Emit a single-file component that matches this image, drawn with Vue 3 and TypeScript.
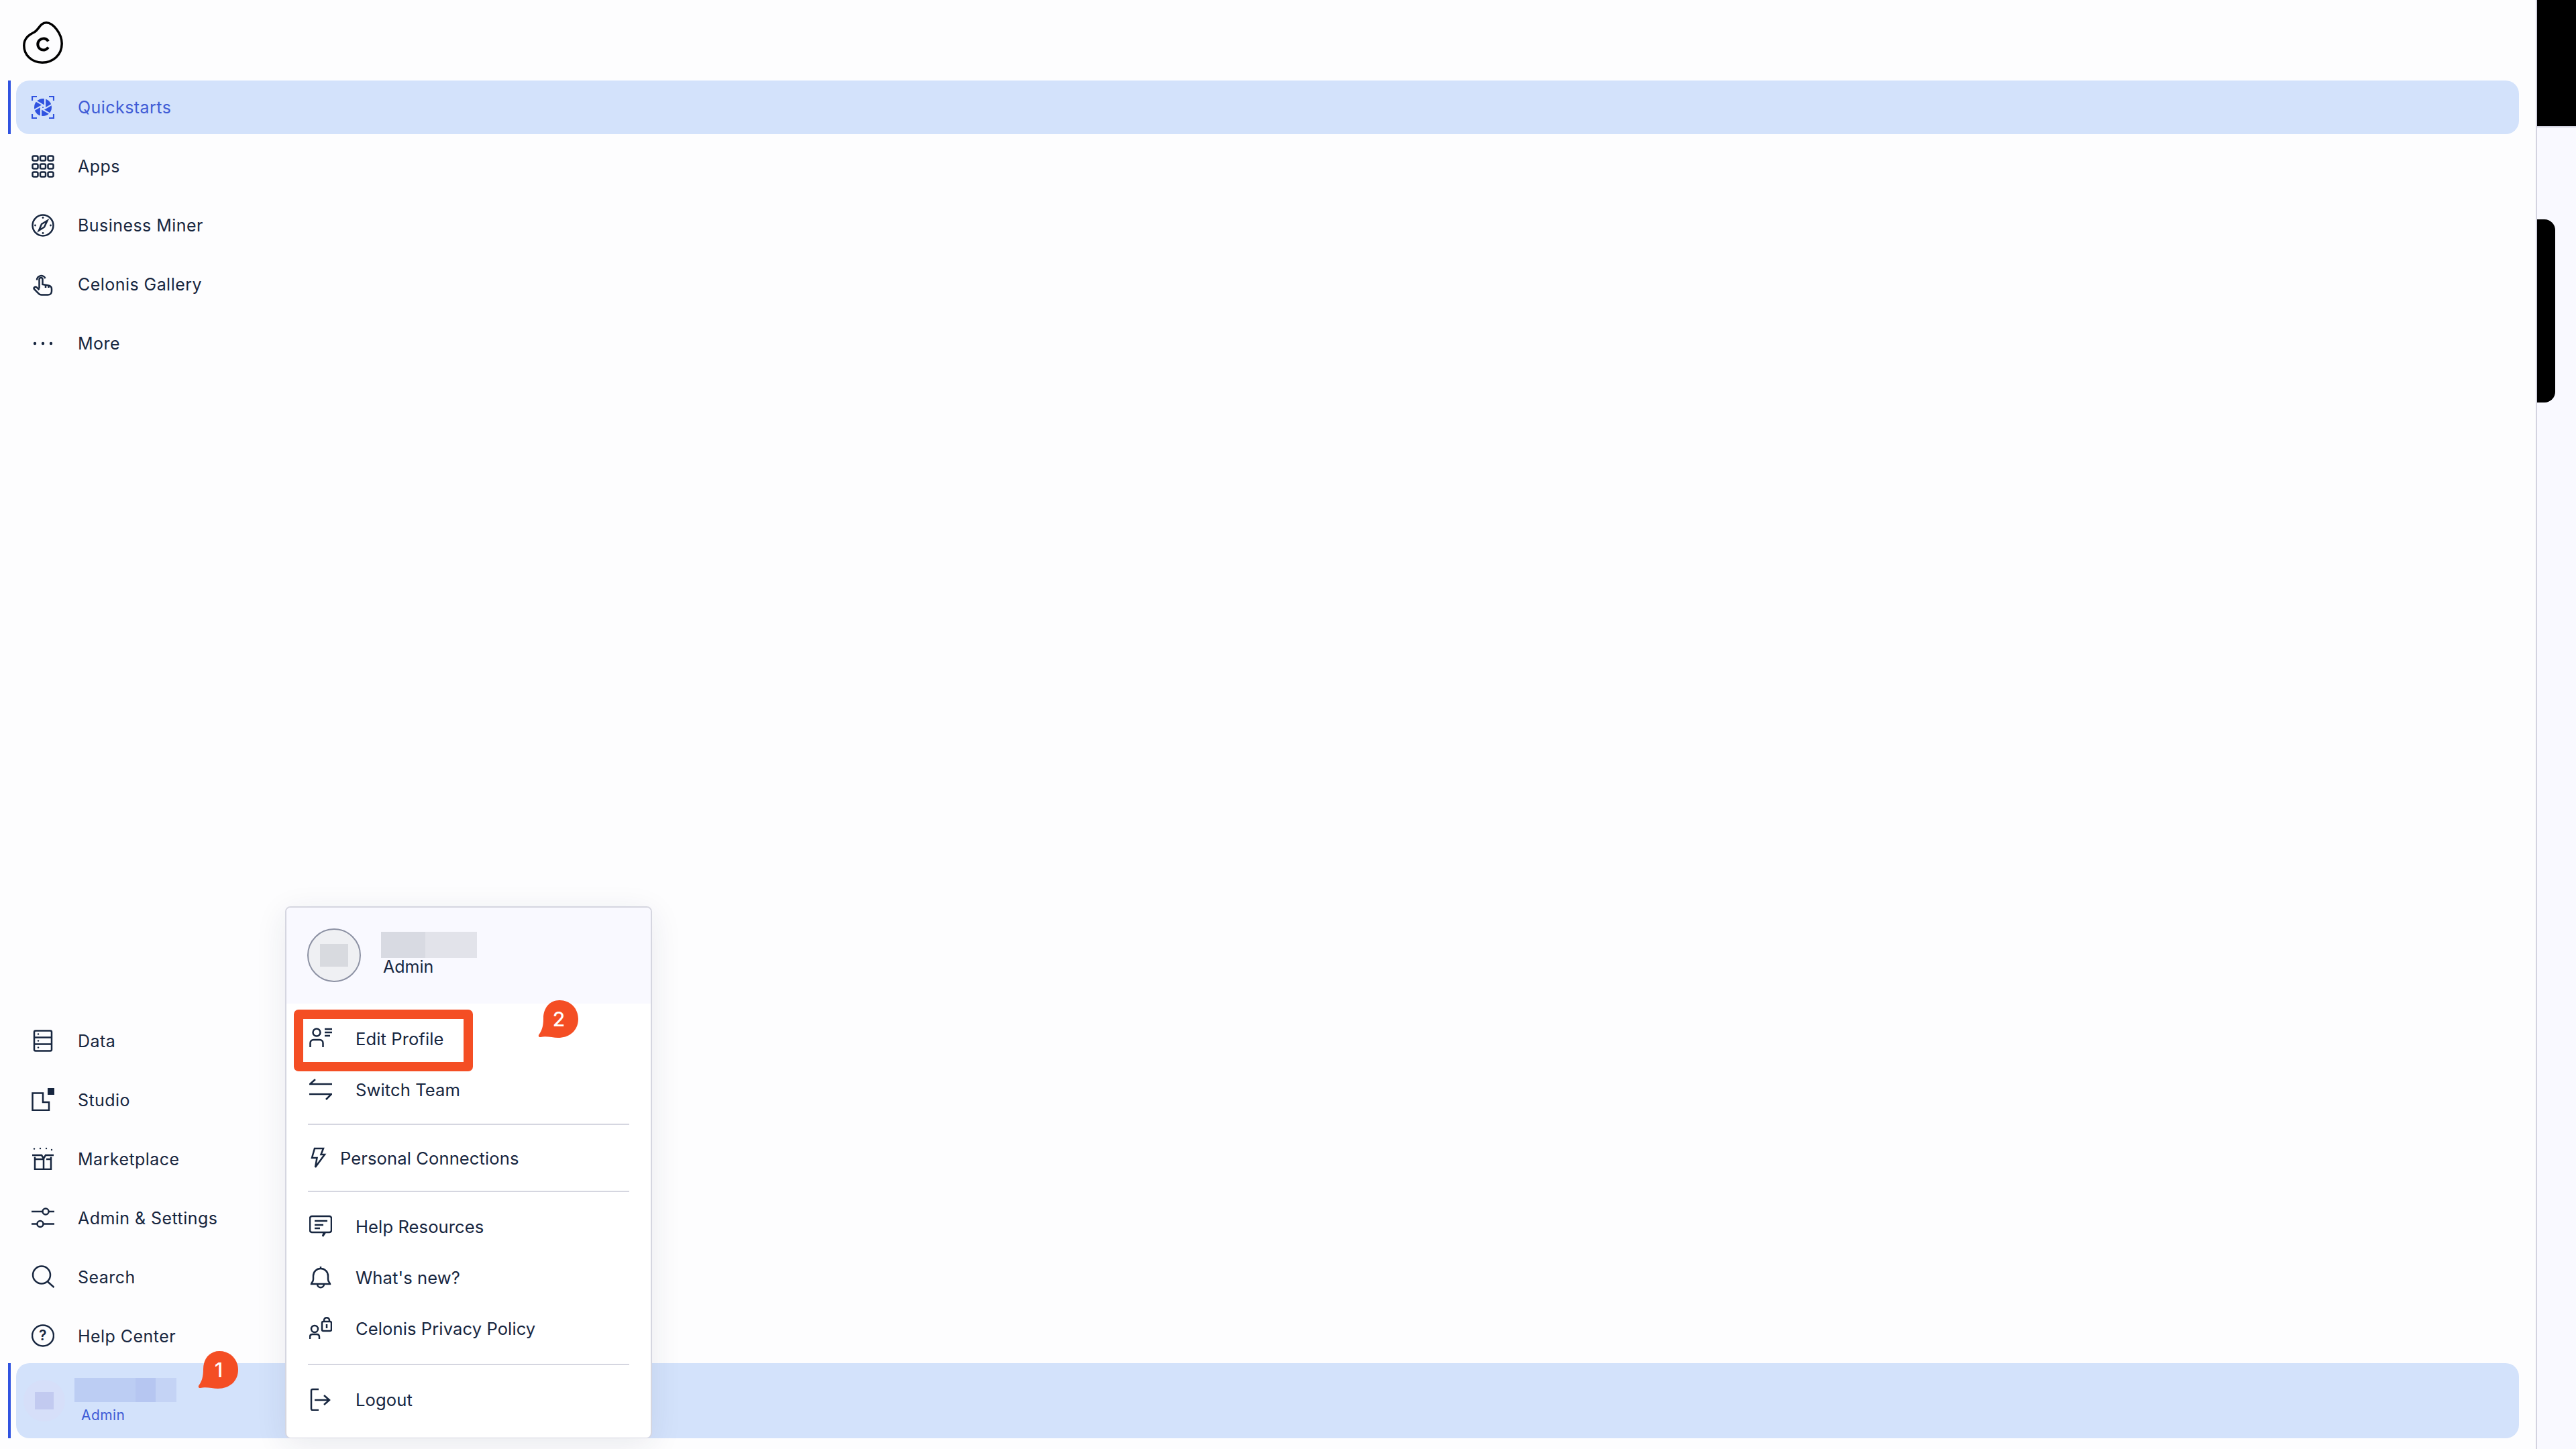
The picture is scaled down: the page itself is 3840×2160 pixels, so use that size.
<script setup lang="ts">
const shutter = [0, 60, 120, 180, 240, 300]
  .map((deg) => `<path transform="rotate(${deg} 17 17)" d="M20 18V2.500" stroke="#d3e2fb" stroke-width="2.200"/>`)
  .join("");

const icons: Record<string, string> = {
  quick: `<path stroke="#2f52e0" stroke-width="2.200" d="M1 7V1h7M26 1h7v6M33 27v6h-7M8 33H1v-6"/><circle cx="17" cy="17" r="13" fill="#2f52e0" stroke="none"/>${shutter}<circle cx="17" cy="17" r="3" fill="#d3e2fb" stroke="none"/><circle cx="17" cy="17" r="1.100" fill="#2f52e0" stroke="none"/>`,
  apps: `<rect x="1.500" y="1.500" width="8" height="7" rx="2"/><rect x="13" y="1.500" width="8" height="7" rx="2"/><rect x="24.500" y="1.500" width="8" height="7" rx="2"/><rect x="1.500" y="13.500" width="8" height="7" rx="2"/><rect x="13" y="13.500" width="8" height="7" rx="2"/><rect x="24.500" y="13.500" width="8" height="7" rx="2"/><rect x="1.500" y="25.500" width="8" height="7" rx="2"/><rect x="13" y="25.500" width="8" height="7" rx="2"/><rect x="24.500" y="25.500" width="8" height="7" rx="2"/>`,
  compass: `<circle cx="17" cy="17" r="15.500"/><path d="M23.500 10 19 19.500 11 24.500 15 15Z"/><g fill="#17263f" stroke="none"><circle cx="17" cy="5.500" r="1.400"/><circle cx="17" cy="28.500" r="1.400"/><circle cx="5.500" cy="17" r="1.400"/><circle cx="28.500" cy="17" r="1.400"/></g>`,
  hand: `<path d="M8 10.500A6.500 6.500 0 0 1 20.500 8"/><path d="M11.500 23V9.500a2.500 2.500 0 0 1 5 0V17l8.500 1.500c3 .6 5 2.500 5 5v3.500c0 3.500-2.500 5.500-5.500 5.500H15c-2.500 0-4-1-5.500-3L4 24c-1.500-2.200 1.500-4.500 3.500-2.800L11.500 25"/><path d="M21 18v4M25.500 19v3"/>`,
  more: `<g fill="#17263f" stroke="none"><circle cx="5" cy="17" r="2.200"/><circle cx="17" cy="17" r="2.200"/><circle cx="29" cy="17" r="2.200"/></g>`,
  data: `<rect x="4" y="2.500" width="26" height="30" rx="2"/><path d="M4 12.500h26M4 22.500h26"/><g fill="#17263f" stroke="none"><circle cx="10" cy="7.500" r="1.200"/><circle cx="10" cy="17.500" r="1.200"/><circle cx="10" cy="27.500" r="1.200"/></g>`,
  studio: `<path d="M1.500 7.500H17V21h9v12H1.500Z"/><rect x="24" y="0" width="10" height="10" fill="#17263f" stroke="none"/>`,
  market: `<path d="M1 12h14l3 5M33 12H21l-3 5M5 14.500V33h24V14.500M5 18h13M18 14v19M22 18h7"/><g fill="#17263f" stroke="none"><circle cx="4" cy="2.500" r="1.200"/><circle cx="13" cy="2" r="1.200"/><circle cx="22" cy="2" r="1.200"/><circle cx="30" cy="4" r="1.200"/></g>`,
  sliders: `<path d="M0 8h16M26 8h8M0 26.500h8M18 26.500h16"/><circle cx="21" cy="8" r="4.500"/><circle cx="13" cy="26.500" r="4.500"/>`,
  search: `<circle cx="15" cy="14.500" r="13"/><path d="m24 24.500 9.500 8.500"/>`,
  help: `<ellipse cx="17" cy="17" rx="16" ry="15.500"/><text x="17" y="24" text-anchor="middle" font-family="Inter, sans-serif" font-size="21" font-weight="600" fill="#17263f" stroke="none">?</text>`,
  profile: `<circle cx="11" cy="8" r="5.500"/><path d="M1.500 30V24c0-3 2-5 5-5h9c3 0 5 2 5 5v6M23 3h11M23 8h11M23 13h8"/>`,
  swap: `<path d="M34 9H1l8-7M0 24h33l-8 8"/>`,
  bolt: `<path d="M8 3h13l-3.500 9H23L9 31l2.500-14H4Z"/>`,
  chat: `<path d="M4 2h26a3 3 0 0 1 3 3v18a3 3 0 0 1-3 3h-6l-4 6 2-6H4a3 3 0 0 1-3-3V5a3 3 0 0 1 3-3ZM8 9h19M8 15h13M8 20h8"/>`,
  bell: `<path d="M17 1v3M3 27c0-2 3-3 3-7v-5c0-6.500 5-11 11-11s11 4.500 11 11v5c0 4 3 5 3 7ZM12 27c0 7 10 7 10 0"/>`,
  privacy: `<circle cx="8" cy="18" r="5"/><path d="M1 33v-3c0-2.500 1.500-4 4-4h6c2.500 0 4 1.500 4 4v3"/><rect x="19" y="7" width="14" height="14" rx="2"/><path d="M22 7V5c0-5 8-5 8 0v2M26 11v6"/>`,
  logout: `<path d="M14 2H5a2 2 0 0 0-2 2v27a2 2 0 0 0 2 2h9M8 18h21M22 11l8 7-8 7"/>`,
};

const topNav = [
  { label: "Quickstarts", icon: "quick", active: true },
  { label: "Apps", icon: "apps" },
  { label: "Business Miner", icon: "compass" },
  { label: "Celonis Gallery", icon: "hand" },
  { label: "More", icon: "more" },
];

const bottomNav = [
  { label: "Data", icon: "data" },
  { label: "Studio", icon: "studio" },
  { label: "Marketplace", icon: "market" },
  { label: "Admin & Settings", icon: "sliders" },
  { label: "Search", icon: "search" },
  { label: "Help Center", icon: "help" },
];

const menuGroups = [
  [
    { label: "Edit Profile", icon: "profile" },
    { label: "Switch Team", icon: "swap" },
  ],
  [{ label: "Personal Connections", icon: "bolt", narrow: true }],
  [
    { label: "Help Resources", icon: "chat" },
    { label: "What's new?", icon: "bell" },
    { label: "Celonis Privacy Policy", icon: "privacy" },
  ],
  [{ label: "Logout", icon: "logout" }],
];
</script>

<template>
  <div class="page">
    <aside class="sidebar">
      <div class="logo">
        <svg width="60" height="63" viewBox="0 0 60 63" fill="none" stroke="#000" stroke-width="3.500">
          <path d="M35 1.800C45 1.800 58.200 18 58.200 33C58.200 50 45 61.200 29 61.200C13 61.200 1.800 50 1.800 36C1.800 25 9 20 17 16C24 12 26 1.800 35 1.800Z" />
          <path d="M38 29.500a8.500 8.500 0 1 0 0 9" stroke-width="4" />
        </svg>
      </div>

      <nav class="nav">
        <a v-for="item in topNav" :key="item.label" class="nav-row" :class="{ active: item.active }">
          <svg class="icon" viewBox="0 0 34 34" fill="none" stroke="#17263f" stroke-width="2.500" v-html="icons[item.icon]" />
          <span>{{ item.label }}</span>
        </a>
      </nav>

      <nav class="nav nav-bottom">
        <a v-for="item in bottomNav" :key="item.label" class="nav-row">
          <svg class="icon" viewBox="0 0 34 34" fill="none" stroke="#17263f" stroke-width="2.500" v-html="icons[item.icon]" />
          <span>{{ item.label }}</span>
        </a>
      </nav>

      <div class="user-row">
        <div class="user-avatar"><i /></div>
        <div class="user-text">
          <div class="user-name"><i /><i /><i /></div>
          <div class="user-role">Admin</div>
        </div>
        <div class="badge badge-one">
          <svg viewBox="0 0 60 58" width="60" height="58"><path d="M32 0C48 0 60 12 60 28C60 45 47 56 30 56C22 56 12 53 4 55C1 55.500 0 53 1.500 51C6 45 8 38 8 27C8 11 18 0 32 0Z" /></svg>
          <span>1</span>
        </div>
      </div>

      <div class="menu">
        <header class="menu-head">
          <div class="menu-avatar"><i /></div>
          <div class="menu-id">
            <div class="menu-name"><i /><i /></div>
            <div class="menu-role">Admin</div>
          </div>
        </header>
        <section v-for="(group, i) in menuGroups" :key="i" class="menu-group">
          <a v-for="item in group" :key="item.label" class="menu-item" :class="{ narrow: item.narrow }">
            <svg class="menu-icon" :viewBox="item.narrow ? '0 0 26 34' : '0 0 34 34'" fill="none" stroke="#17263f" stroke-width="2.500" v-html="icons[item.icon]" />
            <span>{{ item.label }}</span>
          </a>
        </section>
        <div class="highlight" />
        <div class="badge badge-two">
          <svg viewBox="0 0 60 58" width="60" height="58"><path d="M32 0C48 0 60 12 60 28C60 45 47 56 30 56C22 56 12 53 4 55C1 55.500 0 53 1.500 51C6 45 8 38 8 27C8 11 18 0 32 0Z" /></svg>
          <span>2</span>
        </div>
      </div>
    </aside>

    <aside class="side-panel">
      <div class="panel-top" />
      <div class="panel-tab" />
    </aside>
  </div>
</template>

<style>
html,
body {
  margin: 0;
  background: #fdfdfe;
}
</style>

<style scoped>
.page {
  display: flex;
  width: 3840px;
  height: 2160px;
  overflow: hidden;
  background: #fdfdfe;
  color: #17263f;
  font-family: Inter, "Noto Sans", sans-serif;
}
.sidebar {
  position: relative;
  display: flex;
  flex: 1;
  flex-direction: column;
  min-width: 0;
  padding-bottom: 16px;
}
.logo {
  display: flex;
  align-items: flex-start;
  height: 88px;
  padding: 32px 0 0 34px;
}
.nav {
  display: flex;
  flex-direction: column;
  gap: 8px;
}
.nav-bottom {
  margin-top: auto;
}
.nav-row {
  position: relative;
  display: flex;
  align-items: center;
  gap: 35px;
  height: 80px;
  margin: 0 25px 0 24px;
  padding-left: 23px;
  border-radius: 20px;
  font-size: 25px;
  letter-spacing: 0.45px;
}
.nav-bottom .nav-row span {
  padding-top: 1px;
}
.nav-row.active {
  background: #d3e2fb;
  color: #3f5cd6;
}
.nav-row.active::before,
.user-row::before {
  content: "";
  position: absolute;
  top: 0;
  bottom: 0;
  left: -12px;
  width: 4px;
  background: #2f52e0;
}
.icon {
  flex: none;
  width: 34px;
  height: 34px;
}
.user-row {
  position: relative;
  display: flex;
  align-items: center;
  height: 112px;
  margin: 1px 25px 0 24px;
  border-radius: 20px;
  background: #d3e2fb;
}
.user-avatar {
  display: flex;
  flex: none;
  align-items: center;
  justify-content: center;
  width: 62px;
  height: 62px;
  margin-left: 11px;
  border-radius: 50%;
  background: #d6dff9;
}
.user-avatar i {
  width: 28px;
  height: 26px;
  background: #c2caf0;
}
.user-text {
  margin-left: 14px;
}
.user-name {
  display: flex;
  height: 36px;
}
.user-name i:nth-child(1) {
  width: 91px;
  background: #bccdf3;
}
.user-name i:nth-child(2) {
  width: 30px;
  background: #b6c6f1;
}
.user-name i:nth-child(3) {
  width: 31px;
  background: #c4d3f5;
}
.user-role {
  margin: 7px 0 0 10px;
  color: #3f5cd6;
  font-size: 21px;
  line-height: 26px;
  letter-spacing: 0.4px;
}
.badge {
  position: absolute;
  width: 60px;
  height: 58px;
  color: #fff;
  font-size: 30px;
  font-weight: 500;
  line-height: 56px;
  text-align: center;
}
.badge svg {
  position: absolute;
  top: 0;
  left: 0;
  fill: #f44e24;
}
.badge span {
  position: relative;
  display: block;
  padding-left: 2px;
}
.badge-one {
  top: -18px;
  left: 271px;
}
.badge-two {
  top: 138px;
  left: 375px;
}
.menu {
  position: absolute;
  top: 1351px;
  left: 425px;
  box-sizing: border-box;
  width: 547px;
  height: 793px;
  border: 2px solid #d5d6e0;
  border-bottom-width: 1px;
  border-radius: 8px;
  background: #fff;
  box-shadow: 0 10px 48px rgba(30, 40, 80, 0.09);
}
.menu-head {
  display: flex;
  align-items: flex-start;
  box-sizing: border-box;
  height: 143px;
  padding: 31px 0 0 31px;
  border-radius: 6px 6px 0 0;
  background: #f9f9ff;
}
.menu-avatar {
  display: flex;
  flex: none;
  align-items: center;
  justify-content: center;
  box-sizing: border-box;
  width: 80px;
  height: 80px;
  border: 2px solid #8c91a3;
  border-radius: 50%;
  background: #eff0f3;
}
.menu-avatar i {
  width: 42px;
  height: 34px;
  background: #d8dadf;
}
.menu-id {
  margin-left: 30px;
  padding-top: 5px;
}
.menu-name {
  display: flex;
  height: 39px;
}
.menu-name i:nth-child(1) {
  width: 66px;
  background: #d8dae2;
}
.menu-name i:nth-child(2) {
  width: 77px;
  background: #e2e3ea;
}
.menu-role {
  margin: -2px 0 0 3px;
  font-size: 25px;
  line-height: 30px;
}
.menu-group {
  margin: 0 32px;
  padding: 11px 0;
  border-bottom: 2px solid #d5d6e0;
}
.menu-group:first-of-type {
  padding-top: 14px;
  padding-bottom: 13px;
}
.menu-group:nth-of-type(3) {
  padding-top: 13px;
  padding-bottom: 15px;
}
.menu-group:last-of-type {
  border-bottom: none;
  padding-top: 13px;
}
.menu-item {
  display: flex;
  align-items: center;
  gap: 35px;
  height: 76px;
  padding-left: 2px;
  font-size: 25.6px;
  letter-spacing: 0.08px;
}
.menu-item.narrow {
  gap: 20px;
}
.menu-item.narrow .menu-icon {
  width: 26px;
}
.menu-icon {
  flex: none;
  width: 34px;
  height: 34px;
}
.highlight {
  position: absolute;
  top: 152px;
  left: 11px;
  box-sizing: border-box;
  width: 267px;
  height: 92px;
  border: 14px solid #f44e24;
  border-radius: 7px;
}
.side-panel {
  display: flex;
  flex: none;
  flex-direction: column;
  box-sizing: border-box;
  width: 60px;
  height: 100%;
  border-left: 2px solid #d3d3e0;
  background: #f9f9ff;
}
.panel-top {
  height: 188px;
  border-bottom: 2px solid #d3d3e0;
  background: #000;
}
.panel-tab {
  width: 27px;
  height: 273px;
  margin-top: 137px;
  border-radius: 0 16px 16px 0;
  background: #000;
}
</style>
